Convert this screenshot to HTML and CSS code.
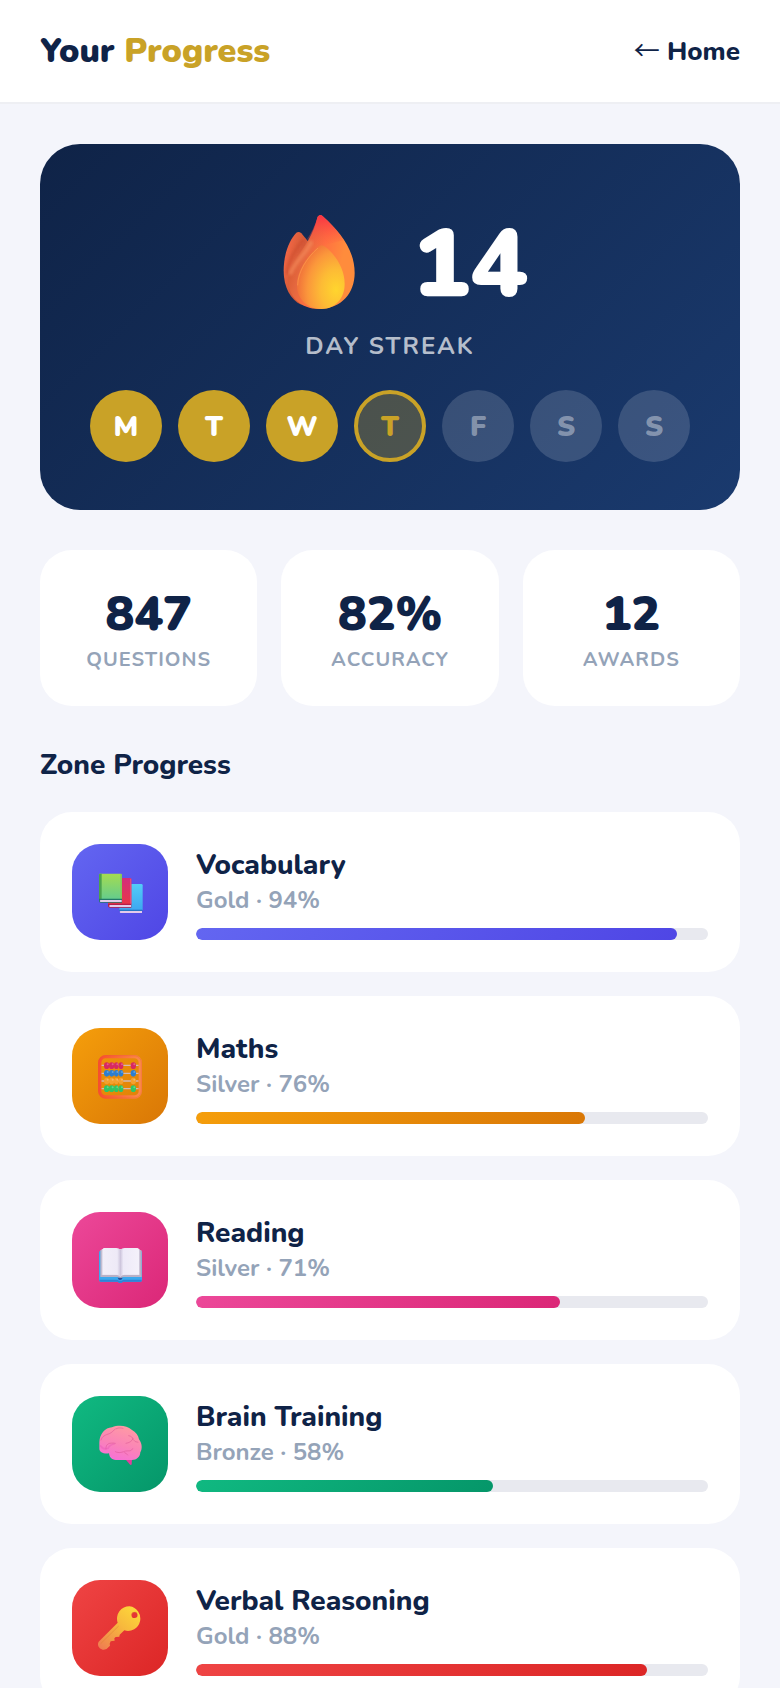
FILE: index.html
```html
<!DOCTYPE html>
<html lang="en">
<head>
<meta charset="utf-8">
<meta name="viewport" content="width=device-width, initial-scale=1">
<title>Your Progress</title>
<link rel="stylesheet" href="styles.css">
</head>
<body>
<header class="header">
  <h1 class="title">Your <span class="title-accent">Progress</span></h1>
  <a class="home" href="#"><span class="arrow">←</span> Home</a>
</header>
<main class="main">
  <section class="streak">
    <div class="streak-top">
      <svg class="flame" viewBox="-26 69 432 312" aria-hidden="true">
        <defs>
          <linearGradient id="fl1" x1="0" y1="0" x2="0.9" y2="0.7"><stop offset="0" stop-color="#ff6a4d"/><stop offset=".45" stop-color="#e0603c"/><stop offset="1" stop-color="#c64f35"/></linearGradient>
          <linearGradient id="fl2" x1="0.1" y1="0.2" x2="0.8" y2="0.5"><stop offset="0" stop-color="#d4562f"/><stop offset=".3" stop-color="#e5683f"/><stop offset=".6" stop-color="#ff7140"/><stop offset="1" stop-color="#ff8c3c"/></linearGradient>
          <linearGradient id="fl3" x1="0" y1="0" x2="0" y2="1"><stop offset="0" stop-color="#fb3244"/><stop offset="1" stop-color="#ff5a42" stop-opacity="0"/></linearGradient>
          <radialGradient id="fl4" cx=".82" cy=".7" r=".8"><stop offset="0" stop-color="#ffd52e"/><stop offset=".4" stop-color="#fdbb35"/><stop offset=".75" stop-color="#fb973b"/><stop offset="1" stop-color="#f1743a"/></radialGradient>
          <filter id="soft"><feGaussianBlur stdDeviation="4"/></filter>
        </defs>
        <path fill="url(#fl1)" d="M107 128q8-5 15 2l20 24-20 190C90 330 69 292 69 242c0-45 14-89 38-114z"/>
        <path fill="none" stroke="#c9482c" stroke-width="9" stroke-linecap="round" opacity=".6" filter="url(#soft)" d="M126 152c-24 28-42 58-47 96"/>
        <path fill="url(#fl2)" d="M171 80q8-10 17 0c48 43 94 98 94 169 0 58-38 108-107 108-54 0-91-35-92-83-1-67 65-96 88-194z"/>
        <path fill="url(#fl3)" d="M171 80q8-10 17 0c23 21 45 44 61 71l-80 20-30-24c14-18 24-40 32-67z"/>
        <path fill="none" stroke="#f58a5c" stroke-width="12" stroke-linecap="round" opacity=".7" filter="url(#soft)" d="M151 158c-16 34-47 54-61 91"/>
        <path fill="url(#fl4)" d="M174 170q9-9 21 1c32 26 57 67 57 111 0 42-27 75-70 75-42 0-73-30-73-71 0-44 30-88 65-116z"/>
        <path fill="none" stroke="#ffa050" stroke-width="3" opacity=".6" d="M172 174c-33 29-60 70-61 112"/>
      </svg>
      <span class="streak-count">14</span>
    </div>
    <p class="streak-label">DAY STREAK</p>
    <ul class="days">
      <li class="day day-done">M</li><li class="day day-done">T</li><li class="day day-done">W</li><li class="day day-today">T</li><li class="day">F</li><li class="day">S</li><li class="day">S</li>
    </ul>
  </section>

  <section class="stats">
    <div class="stat"><strong class="stat-value">847</strong><span class="stat-label">QUESTIONS</span></div>
    <div class="stat"><strong class="stat-value">82%</strong><span class="stat-label">ACCURACY</span></div>
    <div class="stat"><strong class="stat-value">12</strong><span class="stat-label">AWARDS</span></div>
  </section>

  <h2 class="section-title">Zone Progress</h2>
  <section class="zones">
    <article class="zone zone-vocab">
      <div class="zone-icon">
        <svg viewBox="78 84 144 144" aria-hidden="true">
          <defs>
            <linearGradient id="bkg" x1="0" y1="0" x2="0" y2="1"><stop offset="0" stop-color="#a5dc50"/><stop offset="1" stop-color="#63cc8e"/></linearGradient>
            <linearGradient id="bkr" x1="0" y1="0" x2="0" y2="1"><stop offset="0" stop-color="#d32c7c"/><stop offset="1" stop-color="#e83648"/></linearGradient>
            <linearGradient id="bkb" x1="0" y1="0" x2="0" y2="1"><stop offset="0" stop-color="#53ccf8"/><stop offset="1" stop-color="#3ea8f0"/></linearGradient>
          </defs>
          <path fill="url(#bkb)" d="M148 132h66q4 0 4 4v74h-70z"/><path fill="#2777c5" d="M148 209h69v4h-69z"/><path fill="#e3cbea" d="M151 213h65v6h-65q-4-3 0-6z"/>
          <path fill="url(#bkr)" d="M114 114h66q4 0 4 4v75h-70z"/><path fill="#e84a78" d="M180 116h4v76h-4z"/><path fill="#b51e49" d="M114 191h70v12h-65q-5-1-5-5z"/><path fill="#e3cbea" d="M119 195h64v6h-64q-3-3 0-6z"/>
          <path fill="url(#bkg)" d="M90 101h62q4 0 4 4v74H87v-74q0-4 3-4z"/><path fill="#4ba24d" d="M90 101h5v76h-8v-72q0-4 3-4z"/><path fill="#82c95b" d="M151 102h5v74h-5z"/><path fill="#237869" d="M87 176h69v12H92q-5 0-5-5z"/><path fill="#e3cbea" d="M91 180h64v6H91q-3-3 0-6z"/>
        </svg>
      </div>
      <div class="zone-body"><h3 class="zone-name">Vocabulary</h3><p class="zone-meta">Gold · 94%</p><div class="track" role="progressbar" aria-label="Vocabulary" aria-valuenow="94"><div class="fill" style="width:94%"></div></div></div>
    </article>
    <article class="zone zone-maths">
      <div class="zone-icon">
        <svg viewBox="78 84 144 144" aria-hidden="true">
          <defs>
            <linearGradient id="abf"><stop offset="0" stop-color="#f9502e"/><stop offset="1" stop-color="#fb8b49"/></linearGradient>
            <g id="beads"><ellipse cx="110" cy="125" rx="8" ry="10"/><ellipse cx="125" cy="125" rx="8" ry="10"/><ellipse cx="139" cy="125" rx="7" ry="10"/><ellipse cx="153" cy="125" rx="7" ry="10"/><ellipse cx="190" cy="125" rx="8" ry="10"/></g>
            <g id="bead-shine" fill="#fff" opacity=".25"><circle cx="113" cy="121" r="3"/><circle cx="128" cy="121" r="3"/><circle cx="142" cy="121" r="3"/><circle cx="156" cy="121" r="3"/><circle cx="193" cy="121" r="3"/></g>
          </defs>
          <path stroke="#d4b8b4" stroke-width="4" d="M94 124h112M94 148h112M94 171h112M94 194h112"/>
          <use href="#beads" fill="#d82860"/><use href="#beads" y="23" fill="#2c7ed0"/><use href="#beads" y="46" fill="#f4a02e"/><use href="#beads" y="69" fill="#30c565"/>
          <use href="#bead-shine"/><use href="#bead-shine" y="23"/><use href="#bead-shine" y="46"/><use href="#bead-shine" y="69"/>
          <rect x="89" y="98" width="122" height="121" rx="18" fill="none" stroke="url(#abf)" stroke-width="10"/>
          <rect x="86" y="95" width="128" height="127" rx="21" fill="none" stroke="#e85435" stroke-width="2" opacity=".5"/>
        </svg>
      </div>
      <div class="zone-body"><h3 class="zone-name">Maths</h3><p class="zone-meta">Silver · 76%</p><div class="track" role="progressbar" aria-label="Maths" aria-valuenow="76"><div class="fill" style="width:76%"></div></div></div>
    </article>
    <article class="zone zone-reading">
      <div class="zone-icon">
        <svg viewBox="78 84 144 144" aria-hidden="true">
          <defs>
            <linearGradient id="opn"><stop offset="0" stop-color="#f2eef9"/><stop offset=".4" stop-color="#eeeaf7"/><stop offset=".49" stop-color="#cec6dd"/><stop offset=".57" stop-color="#eeeaf8"/><stop offset="1" stop-color="#f4f1fa"/></linearGradient>
          </defs>
          <path fill="#3ba8ee" d="M91 128h120q5 0 5 5v83q0 5-5 5h-52q-8 7-16 0H92q-5 0-5-5v-83q0-5 4-5z"/>
          <path fill="#2d83d6" d="M88 215h54q9 7 18 0h55v3q0 3-4 3h-52q-8 7-16 0H92q-4 0-4-6z"/>
          <path fill="#b9b1c7" d="M91 126h6v74h109v-74h6q3 0 3 4v77h-56q-8 8-16 0H91z"/>
          <path fill="#d9d3e3" d="M95 123h114v78h-47q-11 0-11 8-1-8-12-8H95z"/>
          <path fill="url(#opn)" d="M102 120h37q9 0 12 6 4-6 13-6h38q5 0 5 5v75h-43q-10 0-13 6-2-6-12-6H98v-75q0-5 4-5z"/>
          <path fill="#254f9b" d="M143 209h15q-2 7-8 7-5 0-7-7z"/>
        </svg>
      </div>
      <div class="zone-body"><h3 class="zone-name">Reading</h3><p class="zone-meta">Silver · 71%</p><div class="track" role="progressbar" aria-label="Reading" aria-valuenow="71"><div class="fill" style="width:71%"></div></div></div>
    </article>
    <article class="zone zone-brain">
      <div class="zone-icon">
        <svg viewBox="78 84 144 144" aria-hidden="true">
          <defs>
            <linearGradient id="brn" x1=".65" y1="0" x2=".25" y2="1"><stop offset="0" stop-color="#ff9ba3"/><stop offset=".55" stop-color="#fa83b8"/><stop offset="1" stop-color="#f66fd9"/></linearGradient>
          </defs>
          <path fill="#e43c9e" d="M165 200h21l-1 17q-2 4-6 0z"/>
          <path fill="url(#brn)" d="M88 151c1-24 17-44 38-45 20-8 45-5 59 7 13 7 20 17 22 29 10 13 10 29 4 39-1 14-11 23-25 23h-48c-14-1-20-9-21-20-13 3-30-2-29-15z"/>
          <g fill="none" stroke="#d85191" stroke-width="3" stroke-linecap="round" opacity=".5">
            <path d="M93 144c4-13 14-15 25-19 8-3 11-9 18-14M139 110c8-4 14-2 20-1M108 171c-2-16 11-20 28-17M168 154c10-2 17-5 21-14M176 131q12 2 13 11 5 9 15 9M136 179c11 6 22 1 31-2 12-1 17 1 21-7M164 182q6 2 9 7"/>
          </g>
          <path fill="none" stroke="#e755b4" stroke-width="5" stroke-linecap="round" opacity=".4" d="M92 162q8 12 22 7 4-10 18-13"/>
        </svg>
      </div>
      <div class="zone-body"><h3 class="zone-name">Brain Training</h3><p class="zone-meta">Bronze · 58%</p><div class="track" role="progressbar" aria-label="Brain Training" aria-valuenow="58"><div class="fill" style="width:58%"></div></div></div>
    </article>
    <article class="zone zone-verbal">
      <div class="zone-icon">
        <svg viewBox="78 84 144 144" aria-hidden="true">
          <defs>
            <linearGradient id="key" x1=".85" y1=".1" x2=".1" y2="1"><stop offset="0" stop-color="#fcd33a"/><stop offset=".4" stop-color="#f7b83d"/><stop offset="1" stop-color="#ef7d51"/></linearGradient>
          </defs>
          <path fill="url(#key)" fill-rule="evenodd" d="M179 91a37 37 0 1 1-16 72l-14 13-1 6-11 1-4 4 1 7-12 2-3 7 1 6-8 8c-13 12-35-4-26-20l57-57A37 37 0 0 1 179 91zM193 108a9 9 0 1 0 1 18 9 9 0 0 0-1-18z"/>
          <path fill="none" stroke="#db812c" stroke-width="2" opacity=".7" d="M185 116a9 9 0 0 1 16-4M92 203l54-53"/>
        </svg>
      </div>
      <div class="zone-body"><h3 class="zone-name">Verbal Reasoning</h3><p class="zone-meta">Gold · 88%</p><div class="track" role="progressbar" aria-label="Verbal Reasoning" aria-valuenow="88"><div class="fill" style="width:88%"></div></div></div>
    </article>
  </section>
</main>
</body>
</html>
```
FILE: styles.css
```css
* { box-sizing: border-box; margin: 0; padding: 0; }
body {
  background: #f4f5fb;
  color: #0f2347;
  font-family: Nunito, sans-serif;
}
.header {
  display: flex;
  align-items: center;
  justify-content: space-between;
  padding: 28px 40px;
  background: #fff;
  border-bottom: 2px solid #eeeff3;
}
.title { font-size: 34px; line-height: 46px; font-weight: 900; }
.title-accent { color: #c9a227; }
.home { padding-top: 2px; color: inherit; font-size: 26px; line-height: 38px; font-weight: 800; text-decoration: none; }
.arrow { font-family: "Noto Sans CJK JP", sans-serif; font-weight: 400; line-height: 1; }
.main { padding: 40px; }
.streak {
  padding: 54px 48px 48px;
  border-radius: 40px;
  background: linear-gradient(135deg, #0f2347, #1a3a6e);
  color: #fff;
  text-align: center;
}
.streak-top { display: flex; align-items: center; justify-content: center; gap: 16px; }
.flame { width: 144px; height: 104px; }
.streak-count { font-size: 96px; line-height: 134px; font-weight: 900; }
.streak-label {
  color: rgba(255, 255, 255, 0.7);
  font-size: 24px;
  line-height: 28px;
  font-weight: 700;
  letter-spacing: 2px;
}
.days { display: flex; justify-content: center; gap: 16px; margin-top: 30px; list-style: none; }
.day {
  display: flex;
  align-items: center;
  justify-content: center;
  width: 72px;
  height: 72px;
  padding-top: 2px;
  border-radius: 50%;
  background: rgba(255, 255, 255, 0.15);
  color: rgba(255, 255, 255, 0.4);
  font-size: 28px;
  font-weight: 900;
}
.day-done { background: #c9a227; color: #fff; }
.day-today { background: rgba(201, 162, 39, 0.3); border: 4px solid #c9a227; color: #c9a227; }
.stats { display: grid; grid-template-columns: repeat(3, 1fr); gap: 24px; margin-top: 40px; }
.stat {
  display: flex;
  flex-direction: column;
  padding: 32px 16px;
  border-radius: 32px;
  background: #fff;
  text-align: center;
}
.stat-value { font-size: 48px; line-height: 64px; font-weight: 900; }
.stat-label { color: #94a3b8; font-size: 20px; line-height: 28px; font-weight: 700; letter-spacing: 1px; }
.section-title { margin: 40px 0 28px; font-size: 28px; line-height: 38px; font-weight: 800; }
.zones { display: flex; flex-direction: column; gap: 24px; }
.zone {
  display: flex;
  align-items: center;
  gap: 28px;
  padding: 32px;
  border-radius: 32px;
  background: #fff;
}
.zone-icon {
  display: flex;
  flex: none;
  align-items: center;
  justify-content: center;
  width: 96px;
  height: 96px;
  border-radius: 28px;
  background: var(--grad);
}
.zone-icon svg { width: 48px; height: 48px; }
.zone-body { flex: 1; min-width: 0; }
.zone-name { font-size: 28px; line-height: 42px; font-weight: 800; }
.zone-meta { color: #94a3b8; font-size: 24px; line-height: 28px; font-weight: 700; }
.track { height: 12px; margin-top: 14px; border-radius: 6px; background: #e8e9ef; overflow: hidden; }
.fill { height: 100%; border-radius: 6px; background: var(--grad); }
.zone-vocab { --grad: linear-gradient(135deg, #6366f1, #4f46e5); }
.zone-maths { --grad: linear-gradient(135deg, #f59e0b, #d97706); }
.zone-reading { --grad: linear-gradient(135deg, #ec4899, #db2777); }
.zone-brain { --grad: linear-gradient(135deg, #10b981, #059669); }
.zone-verbal { --grad: linear-gradient(135deg, #ef4444, #dc2626); }
```
